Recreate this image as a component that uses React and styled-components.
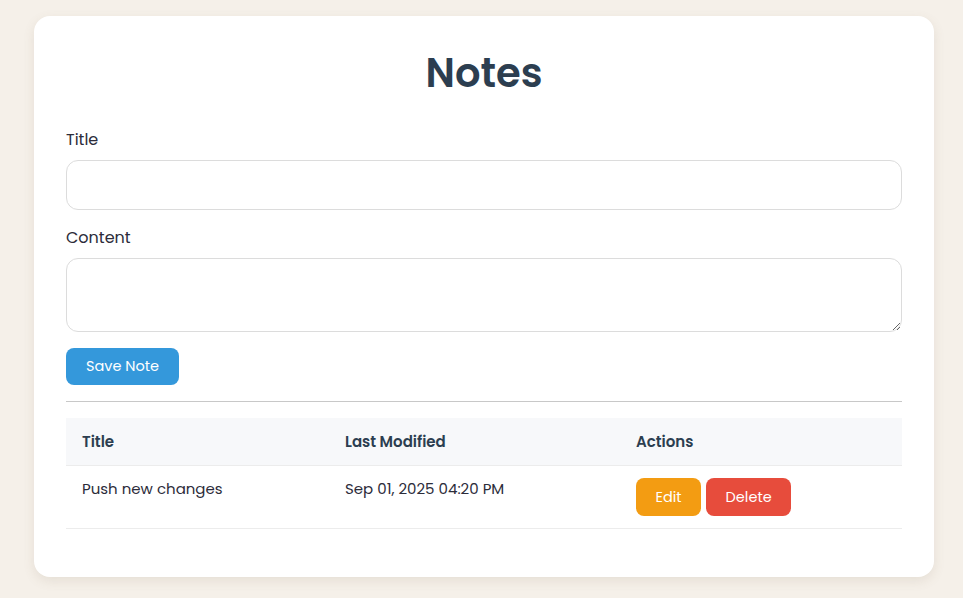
import React from 'react';
import styled, { createGlobalStyle } from 'styled-components';

const GlobalStyle = createGlobalStyle`
  body {
    margin: 0;
    background-color: #f5f0e9;
    font-family: Poppins, Inter, "Noto Sans", sans-serif;
    color: #2c3e50;
  }
`;

const Page = styled.div`
  padding: 16px 29px 21px 34px;
`;

const CardDiv = styled.div`
  width: 900px;
  box-sizing: border-box;
  background-color: #fff;
  border-radius: 16px;
  padding: 29px 32px 48px;
  box-shadow: 0 4px 12px rgba(120, 100, 70, 0.12);
`;

const Heading = styled.h1`
  margin: 0 0 28px;
  text-align: center;
  font-size: 40px;
  font-weight: 600;
  line-height: 1.4;
  color: #2c3e50;
`;

const Label = styled.label`
  display: block;
  font-size: 16px;
  color: #2c2c3a;
  margin-bottom: 9px;
  line-height: 22px;
`;

const Field = styled.div`
  margin-bottom: ${p => p.gap || 16}px;
`;

const TextInput = styled.input`
  display: block;
  width: 100%;
  box-sizing: border-box;
  height: 50px;
  border: 1px solid #dcdcdc;
  border-radius: 12px;
  padding: 12px;
  font: inherit;
  outline: none;
`;

const TextArea = styled.textarea`
  display: block;
  width: 100%;
  box-sizing: border-box;
  height: 74px;
  border: 1px solid #dcdcdc;
  border-radius: 12px;
  padding: 12px;
  font: inherit;
  resize: vertical;
  outline: none;
`;

const Button = styled.button`
  border: none;
  border-radius: 8px;
  color: #fff;
  background-color: ${p => p.bg};
  font-family: inherit;
  font-size: 14.5px;
  height: ${p => p.h || 38}px;
  padding: 0 ${p => p.px || 19.5}px;
  cursor: pointer;
`;

const Divider = styled.hr`
  border: none;
  border-top: 1px solid #c8c8c8;
  margin: 16px 0 16px;
`;

const Table = styled.table`
  width: 100%;
  border-collapse: collapse;
  font-size: 15px;
`;

const Th = styled.th`
  text-align: left;
  font-weight: 600;
  background-color: #f7f8fa;
  color: #2c3e50;
  padding: 0 16px;
  height: 47px;
  border-bottom: 1px solid #ececec;
  width: ${p => p.w || 'auto'};
`;

const Td = styled.td`
  padding: 12px 16px 0;
  vertical-align: top;
  height: 63px;
  box-sizing: border-box;
  border-bottom: 1px solid #ececec;
  color: #2c2c3a;
  line-height: 22px;
`;

const Actions = styled.div`
  display: flex;
  gap: 5px;
`;

export default function App() {
  return (
    <Page>
      <GlobalStyle />
      <CardDiv>
        <Heading>Notes</Heading>
        <Field gap={17}>
          <Label>Title</Label>
          <TextInput type="text" />
        </Field>
        <Field>
          <Label>Content</Label>
          <TextArea />
        </Field>
        <Button bg="#3498db" h={37} px={20}>Save Note</Button>
        <Divider />
        <Table>
          <thead>
            <tr>
              <Th w="231px">Title</Th>
              <Th w="259px">Last Modified</Th>
              <Th>Actions</Th>
            </tr>
          </thead>
          <tbody>
            <tr>
              <Td>Push new changes</Td>
              <Td>Sep 01, 2025 04:20 PM</Td>
              <Td>
                <Actions>
                  <Button bg="#f39c12">Edit</Button>
                  <Button bg="#e74c3c">Delete</Button>
                </Actions>
              </Td>
            </tr>
          </tbody>
        </Table>
      </CardDiv>
    </Page>
  );
}
